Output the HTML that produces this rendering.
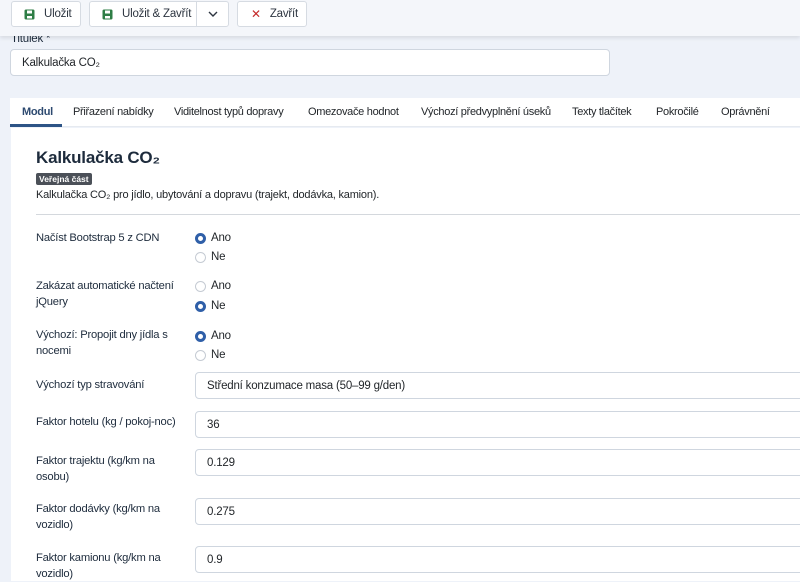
<!DOCTYPE html>
<html><head><meta charset="utf-8"><style>
*{box-sizing:border-box;margin:0;padding:0}
body{width:800px;height:581px;overflow:hidden;background:#eef2f9;font-family:"Liberation Sans",sans-serif;font-size:12px;color:#1d2b3c;position:relative;letter-spacing:-0.2px}
.tb{position:absolute;left:0;top:0;width:800px;height:36px;background:#f4f6fa;box-shadow:0 2px 4px rgba(0,0,0,.1);z-index:2}
.btn{position:absolute;top:1px;height:26px;background:#fff;border:1px solid #d6dbe2;border-radius:3px;font-size:11.5px;color:#2d3540;display:flex;align-items:center}
.abs{position:absolute}
.inp{position:absolute;background:#fff;border:1px solid #cfd6df;border-radius:4px;height:27px;font-size:11.5px;color:#22262a;padding-left:11px;display:flex;align-items:center}
.lbl{position:absolute;left:36px;font-size:11.2px;line-height:16px;color:#1d2b3c}
.r{position:absolute;left:195px;display:flex;align-items:center;font-size:11.5px;color:#22262a}
.r i{display:inline-block;width:11px;height:11px;border-radius:50%;border:1px solid #c5cbd3;margin-right:5px;background:#fff}
.r i.on{border:3.5px solid #2f5fa8}
.tab{position:absolute;top:106px;font-size:11px;color:#22262a;letter-spacing:-0.3px}
</style></head><body>
<div class="tb">
 <div class="btn" style="left:11px;width:70px"><svg style="margin-left:12px" width="11" height="11" viewBox="0 0 11 11"><rect x="0.5" y="0.5" width="10" height="10" rx="1.5" fill="#2e7d45"/><rect x="3" y="1.5" width="5" height="3" fill="#fff"/><rect x="3" y="7" width="5" height="2.5" fill="#fff"/></svg><span style="margin-left:9px">Uložit</span></div>
 <div class="btn" style="left:89px;width:140px"><svg style="margin-left:12px" width="11" height="11" viewBox="0 0 11 11"><rect x="0.5" y="0.5" width="10" height="10" rx="1.5" fill="#2e7d45"/><rect x="3" y="1.5" width="5" height="3" fill="#fff"/><rect x="3" y="7" width="5" height="2.5" fill="#fff"/></svg><span style="margin-left:9px">Uložit &amp; Zavřít</span><span style="position:absolute;left:106px;top:0;height:24px;border-left:1px solid #d6dbe2;width:32px;display:flex;align-items:center;justify-content:center"><svg width="10" height="6" viewBox="0 0 10 6"><path d="M1 1l4 4 4-4" stroke="#2d3540" stroke-width="1.4" fill="none"/></svg></span></div>
 <div class="btn" style="left:237px;width:70px"><span style="margin-left:13px;color:#c52b2b;font-size:12px">✕</span><span style="margin-left:9px">Zavřít</span></div>
</div>
<div class="abs" style="left:11px;top:33px;font-size:11.5px;color:#1d2b3c;z-index:1">Titulek *</div>
<div class="inp" style="left:10px;top:49px;width:600px">Kalkulačka CO₂</div>
<div class="abs" style="left:10px;top:98px;width:790px;height:29px;background:#fff;border-bottom:1px solid #e6eaf0"></div>
<div class="abs" style="left:10px;top:124px;width:52px;height:3px;background:#2d5486"></div>
<div class="tab" style="left:22px;color:#2d4a70;font-weight:bold">Modul</div>
<div class="tab" style="left:73px">Přiřazení nabídky</div>
<div class="tab" style="left:174px">Viditelnost typů dopravy</div>
<div class="tab" style="left:308px">Omezovače hodnot</div>
<div class="tab" style="left:421px">Výchozí předvyplnění úseků</div>
<div class="tab" style="left:572px">Texty tlačítek</div>
<div class="tab" style="left:656px">Pokročilé</div>
<div class="tab" style="left:721px">Oprávnění</div>
<div class="abs" style="left:11px;top:128px;width:789px;height:453px;background:#fff"></div>
<div class="abs" style="left:36px;top:148px;font-size:17px;font-weight:bold;color:#1d2b3c">Kalkulačka CO₂</div>
<div class="abs" style="left:36px;top:173px;height:12px;padding:0 3px;background:#4b5058;color:#fff;font-size:8.5px;font-weight:bold;line-height:12px;border-radius:2px;letter-spacing:0">Veřejná část</div>
<div class="abs" style="left:36px;top:189px;font-size:11px;color:#22262a">Kalkulačka CO₂ pro jídlo, ubytování a dopravu (trajekt, dodávka, kamion).</div>
<div class="abs" style="left:36px;top:214px;width:764px;height:1px;background:#d4d8dd"></div>

<div class="lbl" style="top:230px">Načíst Bootstrap 5 z CDN</div>
<div class="r" style="top:232px"><i class="on"></i>Ano</div>
<div class="r" style="top:251px"><i></i>Ne</div>
<div class="lbl" style="top:278px">Zakázat automatické načtení<br>jQuery</div>
<div class="r" style="top:280px"><i></i>Ano</div>
<div class="r" style="top:300px"><i class="on"></i>Ne</div>
<div class="lbl" style="top:327px">Výchozí: Propojit dny jídla s<br>nocemi</div>
<div class="r" style="top:330px"><i class="on"></i>Ano</div>
<div class="r" style="top:349px"><i></i>Ne</div>

<div class="lbl" style="top:377px">Výchozí typ stravování</div>
<div class="inp" style="left:195px;top:372px;width:620px">Střední konzumace masa (50–99 g/den)</div>
<div class="lbl" style="top:414px">Faktor hotelu (kg / pokoj-noc)</div>
<div class="inp" style="left:195px;top:411px;width:620px">36</div>
<div class="lbl" style="top:453px">Faktor trajektu (kg/km na<br>osobu)</div>
<div class="inp" style="left:195px;top:449px;width:620px">0.129</div>
<div class="lbl" style="top:501px">Faktor dodávky (kg/km na<br>vozidlo)</div>
<div class="inp" style="left:195px;top:498px;width:620px">0.275</div>
<div class="lbl" style="top:550px">Faktor kamionu (kg/km na<br>vozidlo)</div>
<div class="inp" style="left:195px;top:546px;width:620px">0.9</div>
</body></html>
